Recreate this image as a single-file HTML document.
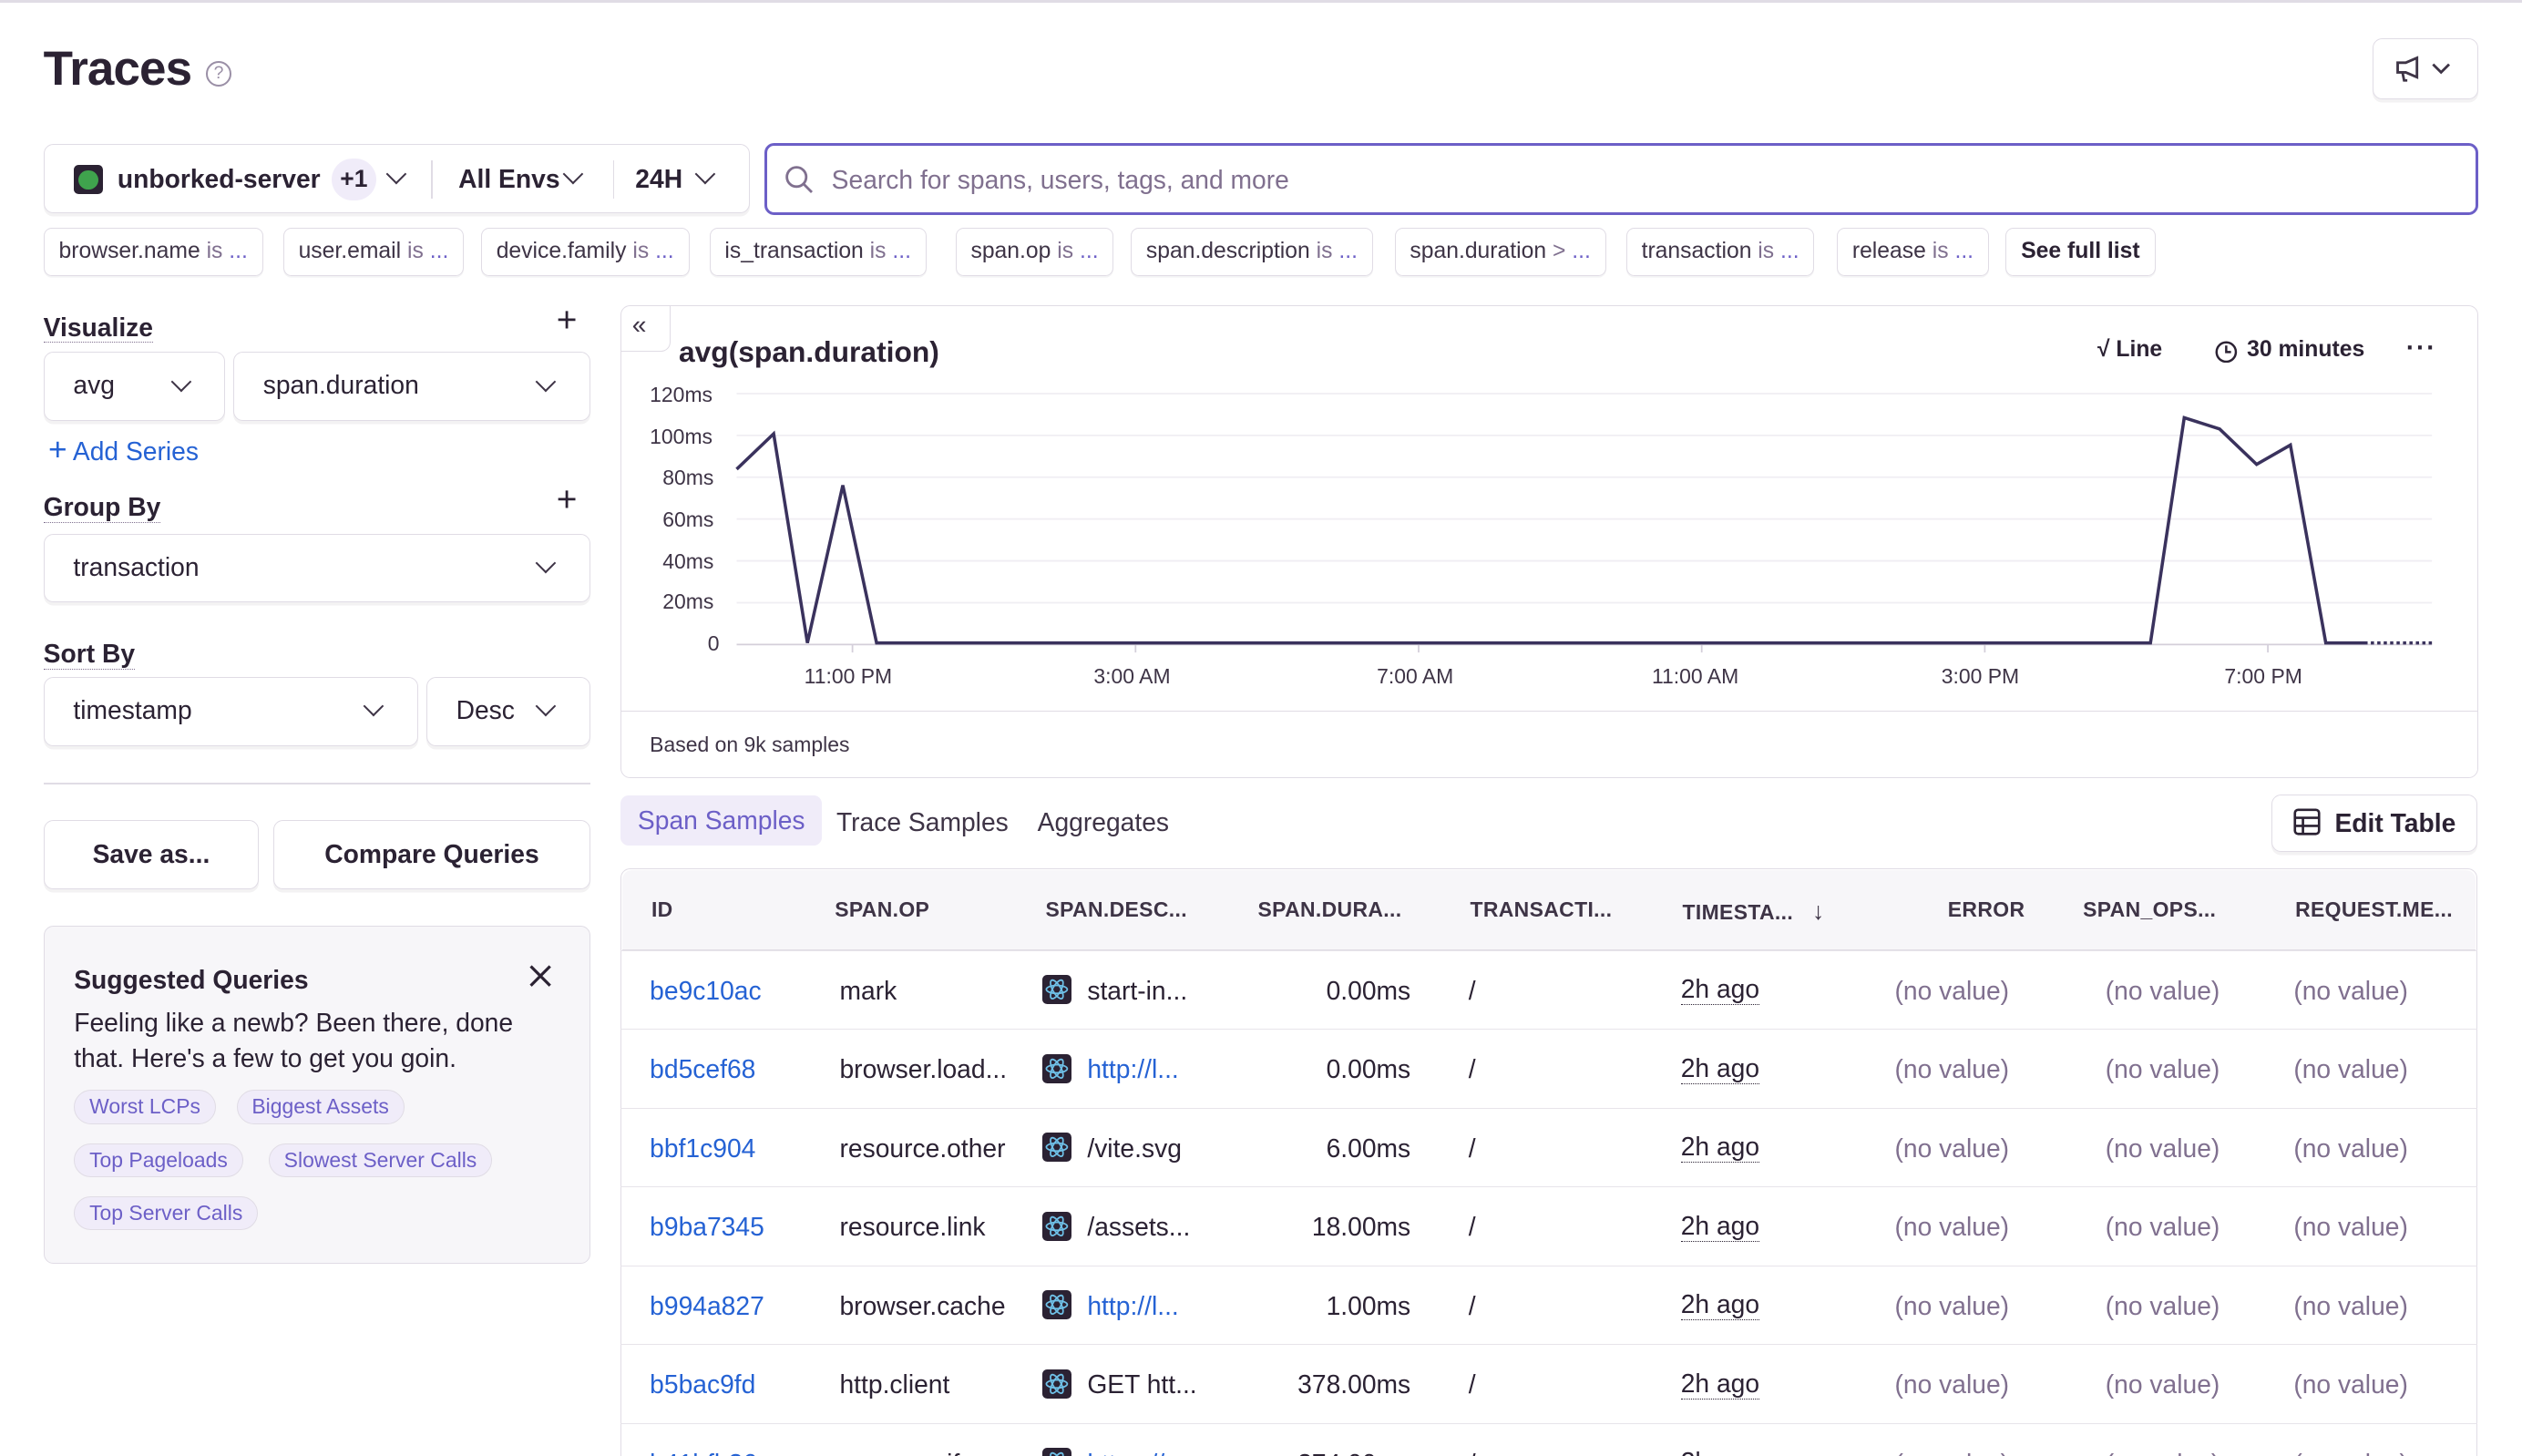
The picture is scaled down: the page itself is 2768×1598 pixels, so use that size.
<!DOCTYPE html>
<html><head><meta charset="utf-8"><style>
*{box-sizing:border-box;margin:0;padding:0}
html,body{width:2768px;height:1598px;overflow:hidden;background:#fff}
#r{zoom:1.76531;width:1568px;height:905px;position:relative;font-family:"Liberation Sans",sans-serif;color:#2b2233;border-top:2px solid #e0dce5}
.a{position:absolute}
.box{position:absolute;border:1px solid #e0dce5;border-radius:6px;background:#fff;box-shadow:0 2px 0 rgba(43,34,51,.06)}
.chip{position:absolute;top:140px;height:30px;border:1px solid #e0dce5;border-radius:5px;font-size:14px;line-height:28px;padding:0 9px;color:#3e3446;white-space:nowrap;box-shadow:0 1px 0 rgba(43,34,51,.05)}
.chip i{font-style:normal;color:#80708f}.chip b{color:#6c5fc7;font-weight:400}
.lbl{position:absolute;font-size:16px;font-weight:700;border-bottom:1px dotted #80708f;line-height:18px}
.plus{position:absolute;font-size:22px;font-weight:300;color:#2b2233}
.sel{font-size:16px;padding-left:18px;line-height:40px;font-weight:500}
.chev{position:absolute;width:9px;height:9px;border-right:1.6px solid #3e3446;border-bottom:1.6px solid #3e3446;transform:rotate(45deg)}
.tag{position:absolute;font-size:13px;color:#6c5fc7;background:#f0ecf9;border:1px solid #e0dce5;border-radius:12px;padding:0 9px;line-height:20px}
.th{position:absolute;top:556px;font-size:13px;color:#3e3446;font-weight:600;letter-spacing:.2px}
.row{position:absolute;left:386px;width:1154px;height:49px;border-top:1px solid #e7e4ea}
.c{position:absolute;font-size:16px;line-height:49px;top:0;color:#2b2233;white-space:nowrap}
.lnk{color:#2562d4}
.nv{color:#80708f}
.ago{border-bottom:1px dotted #2b2233;line-height:18px;top:15px}
.ic{position:absolute;left:262px;top:15px;width:18px;height:18px;background:#2b2233;border-radius:3px}
.ax{position:absolute;font-size:13px;color:#3e3446}
</style></head><body><div id="r">
<div class="a" style="left:27px;top:24px;font-size:30px;font-weight:700;letter-spacing:-.5px">Traces</div>
<div class="a" style="left:128px;top:36px;width:16px;height:16px;border:1.5px solid #9a8fa6;border-radius:50%;font-size:11px;color:#9a8fa6;text-align:center;line-height:13px">?</div>
<div class="box" style="left:1475px;top:22px;width:66px;height:38px"><svg class="a" style="left:13px;top:10px" width="36" height="18" viewBox="0 0 36 18" fill="none" stroke="#3e3446" stroke-width="1.6"><path d="M2 5h5l7-3v12l-7-3H2zM5 11l1 5h2"/><path d="M24 6l5 5 5-5"/></svg></div>

<div class="box" style="left:27px;top:88px;width:439px;height:43px"></div>
<div class="a" style="left:46px;top:101px;width:18px;height:18px;background:#2b2233;border-radius:3px"><div class="a" style="left:3px;top:3px;width:12px;height:12px;background:#3fa34d;border-radius:50%"></div></div>
<div class="a" style="left:73px;top:100px;font-size:16px;font-weight:700">unborked-server</div>
<div class="a" style="left:206px;top:97px;width:28px;height:26px;border-radius:13px;background:#f0ecf9;font-size:15px;font-weight:700;text-align:center;line-height:26px">+1</div>
<div class="chev" style="left:242px;top:102px"></div>
<div class="a" style="left:268px;top:98px;width:1px;height:24px;background:#e0dce5"></div>
<div class="a" style="left:285px;top:100px;font-size:16px;font-weight:700">All Envs</div>
<div class="chev" style="left:352px;top:102px"></div>
<div class="a" style="left:381px;top:98px;width:1px;height:24px;background:#e0dce5"></div>
<div class="a" style="left:395px;top:100px;font-size:16px;font-weight:700">24H</div>
<div class="chev" style="left:434px;top:102px"></div>

<div class="a" style="left:475px;top:87px;width:1066px;height:45px;border:2px solid #6c5fc7;border-radius:6px"></div>
<svg class="a" style="left:488px;top:101px" width="18" height="18" viewBox="0 0 18 18" fill="none" stroke="#80708f" stroke-width="1.6"><circle cx="7.5" cy="7.5" r="6"/><path d="M12 12l5 5"/></svg>
<div class="a" style="left:517px;top:101px;font-size:16px;color:#80708f">Search for spans, users, tags, and more</div>

<div class="chip" style="left:27px">browser.name <i>is</i> <b>...</b></div>
<div class="chip" style="left:176px">user.email <i>is</i> <b>...</b></div>
<div class="chip" style="left:299px">device.family <i>is</i> <b>...</b></div>
<div class="chip" style="left:441px">is_transaction <i>is</i> <b>...</b></div>
<div class="chip" style="left:594px">span.op <i>is</i> <b>...</b></div>
<div class="chip" style="left:703px">span.description <i>is</i> <b>...</b></div>
<div class="chip" style="left:867px">span.duration <i>&gt;</i> <b>...</b></div>
<div class="chip" style="left:1011px">transaction <i>is</i> <b>...</b></div>
<div class="chip" style="left:1142px">release <i>is</i> <b>...</b></div>
<div class="chip" style="left:1247px;font-weight:700;color:#2b2233">See full list</div>

<div class="lbl" style="left:27px;top:193px">Visualize</div><div class="plus" style="left:346px;top:185px">+</div>
<div class="box sel" style="left:27px;top:217px;width:113px;height:43px">avg</div><div class="chev" style="left:108px;top:231px"></div>
<div class="box sel" style="left:145px;top:217px;width:222px;height:43px">span.duration</div><div class="chev" style="left:335px;top:231px"></div>
<div class="a" style="left:30px;top:267px;font-size:16px;color:#2562d4"><span style="font-size:20px;font-weight:300">+</span> Add Series</div>
<div class="lbl" style="left:27px;top:305px">Group By</div><div class="plus" style="left:346px;top:297px">+</div>
<div class="box sel" style="left:27px;top:330px;width:340px;height:43px">transaction</div><div class="chev" style="left:335px;top:344px"></div>
<div class="lbl" style="left:27px;top:396px">Sort By</div>
<div class="box sel" style="left:27px;top:419px;width:233px;height:43px">timestamp</div><div class="chev" style="left:228px;top:433px"></div>
<div class="box sel" style="left:265px;top:419px;width:102px;height:43px">Desc</div><div class="chev" style="left:335px;top:433px"></div>
<div class="a" style="left:27px;top:485px;width:340px;height:1px;background:#e0dce5"></div>
<div class="box" style="left:27px;top:508px;width:134px;height:43px;font-size:16px;font-weight:700;text-align:center;line-height:41px">Save as...</div>
<div class="box" style="left:170px;top:508px;width:197px;height:43px;font-size:16px;font-weight:700;text-align:center;line-height:41px">Compare Queries</div>

<div class="a" style="left:27px;top:574px;width:340px;height:210px;border:1px solid #e0dce5;border-radius:6px;background:#f7f6f9"></div>
<div class="a" style="left:46px;top:598px;font-size:16px;font-weight:700">Suggested Queries</div>
<svg class="a" style="left:328px;top:597px" width="16" height="16" stroke="#2b2233" stroke-width="1.8"><path d="M2 2l12 12M14 2L2 14"/></svg>
<div class="a" style="left:46px;top:623px;width:300px;font-size:16px;line-height:22px">Feeling like a newb? Been there, done that. Here's a few to get you goin.</div>
<div class="tag" style="left:46px;top:676px">Worst LCPs</div>
<div class="tag" style="left:147px;top:676px">Biggest Assets</div>
<div class="tag" style="left:46px;top:709px">Top Pageloads</div>
<div class="tag" style="left:167px;top:709px">Slowest Server Calls</div>
<div class="tag" style="left:46px;top:742px">Top Server Calls</div>

<div class="a" style="left:386px;top:188px;width:1155px;height:294px;border:1px solid #e0dce5;border-radius:6px"></div>
<div class="a" style="left:386px;top:440px;width:1155px;height:1px;background:#e0dce5"></div>
<div class="a" style="left:386px;top:188px;width:31px;height:29px;border:1px solid #e0dce5;border-radius:0 0 6px 0;border-top:0;border-left:0"></div>
<div class="a" style="left:393px;top:191px;font-size:16px;color:#3e3446">&laquo;</div>
<div class="a" style="left:422px;top:207px;font-size:18px;font-weight:600">avg(span.duration)</div>
<div class="a" style="left:1304px;top:208px;font-size:14px;font-weight:700">&#8730; Line</div>
<svg class="a" style="left:1377px;top:210px" width="14" height="14" fill="none" stroke="#2b2233" stroke-width="1.4"><circle cx="7" cy="7" r="6"/><path d="M7 3v4h3"/></svg>
<div class="a" style="left:1397px;top:208px;font-size:14px;font-weight:700">30 minutes</div>
<div class="a" style="left:1496px;top:205px;font-size:16px;font-weight:700;letter-spacing:1px">···</div>
<div class="ax" style="left:404px;top:236px">120ms</div>
<div class="ax" style="left:404px;top:262px">100ms</div>
<div class="ax" style="left:412px;top:288px">80ms</div>
<div class="ax" style="left:412px;top:314px">60ms</div>
<div class="ax" style="left:412px;top:340px">40ms</div>
<div class="ax" style="left:412px;top:365px">20ms</div>
<div class="ax" style="left:440px;top:391px">0</div>
<svg class="a" style="left:0;top:0" width="1568" height="440">
<g stroke="#f0eef3" stroke-width="1"><path d="M458 243H1512M458 269H1512M458 295H1512M458 321H1512M458 347H1512M458 373H1512"/></g>
<path d="M458 399H1512" stroke="#d4cfda"/>
<g stroke="#d4cfda"><path d="M530 399v5M706 399v5M882 399v5M1058 399v5M1234 399v5M1410 399v5"/></g>
<polyline fill="none" stroke="#3a325d" stroke-width="2" points="458,290 481,268 502,398 524,300 545,398 1337,398 1358,258 1380,265 1403,287 1424,275 1446,398 1470,398"/>
<path d="M1470 398H1512" stroke="#3a325d" stroke-width="2" stroke-dasharray="2 2"/>
</svg>
<div class="ax" style="left:500px;top:411px">11:00 PM</div>
<div class="ax" style="left:680px;top:411px">3:00 AM</div>
<div class="ax" style="left:856px;top:411px">7:00 AM</div>
<div class="ax" style="left:1027px;top:411px">11:00 AM</div>
<div class="ax" style="left:1207px;top:411px">3:00 PM</div>
<div class="ax" style="left:1383px;top:411px">7:00 PM</div>
<div class="a" style="left:404px;top:454px;font-size:13px;color:#3e3446">Based on 9k samples</div>

<div class="a" style="left:386px;top:493px;width:125px;height:31px;background:#f0ecf9;border-radius:5px;font-size:16px;color:#6c5fc7;font-weight:500;text-align:center;line-height:31px">Span Samples</div>
<div class="a" style="left:520px;top:500px;font-size:16px;color:#3e3446">Trace Samples</div>
<div class="a" style="left:645px;top:500px;font-size:16px;color:#3e3446">Aggregates</div>
<div class="box" style="left:1412px;top:492px;width:128px;height:36px;font-size:16px;font-weight:700;line-height:34px;padding-left:39px">Edit Table</div>
<svg class="a" style="left:1426px;top:501px" width="17" height="17" fill="none" stroke="#2b2233" stroke-width="1.5"><rect x="1" y="1" width="15" height="15" rx="2"/><path d="M1 6h15M1 11h15M6 6v10"/></svg>

<div class="a" style="left:386px;top:538px;width:1154px;height:380px;border:1px solid #e0dce5;border-radius:6px 6px 0 0"></div>
<div class="a" style="left:387px;top:539px;width:1152px;height:50px;background:#f7f6f9;border-bottom:1px solid #e0dce5;border-radius:6px 6px 0 0"></div>
<div class="th" style="left:405px">ID</div>
<div class="th" style="left:519px">SPAN.OP</div>
<div class="th" style="left:650px">SPAN.DESC...</div>
<div class="th" style="left:782px">SPAN.DURA...</div>
<div class="th" style="left:914px">TRANSACTI...</div>
<div class="th" style="left:1046px">TIMESTA... <span style="margin-left:8px;font-size:15px">&#8595;</span></div>
<div class="th" style="left:1211px">ERROR</div>
<div class="th" style="left:1295px">SPAN_OPS...</div>
<div class="th" style="left:1427px">REQUEST.ME...</div>

<div id="rows"></div>
<script>
var d=[["be9c10ac","mark","start-in...",0,"0.00ms"],["bd5cef68","browser.load...","http://l...",1,"0.00ms"],["bbf1c904","resource.other","/vite.svg",0,"6.00ms"],["b9ba7345","resource.link","/assets...",0,"18.00ms"],["b994a827","browser.cache","http://l...",1,"1.00ms"],["b5bac9fd","http.client","GET htt...",0,"378.00ms"],["b41bfb26","resource.ifra","https://...",1,"274.00ms"]];
var h="";d.forEach(function(r,i){var t=589+i*49;
h+='<div class="row" style="top:'+t+'px"><div class="c lnk" style="left:18px">'+r[0]+'</div><div class="c" style="left:136px">'+r[1]+'</div><div class="ic"><svg width="18" height="18" fill="none" stroke="#6fc1e8" stroke-width="1"><ellipse cx="9" cy="9" rx="6.5" ry="2.5"/><ellipse cx="9" cy="9" rx="6.5" ry="2.5" transform="rotate(60 9 9)"/><ellipse cx="9" cy="9" rx="6.5" ry="2.5" transform="rotate(-60 9 9)"/></svg></div><div class="c'+(r[3]?' lnk':'')+'" style="left:290px">'+r[2]+'</div><div class="c" style="right:663px">'+r[4]+'</div><div class="c" style="left:527px">/</div><div class="c ago" style="left:659px">2h ago</div><div class="c nv" style="left:792px">(no value)</div><div class="c nv" style="left:923px">(no value)</div><div class="c nv" style="left:1040px">(no value)</div></div>';});
document.getElementById("rows").innerHTML=h;
</script>
</div></body></html>
